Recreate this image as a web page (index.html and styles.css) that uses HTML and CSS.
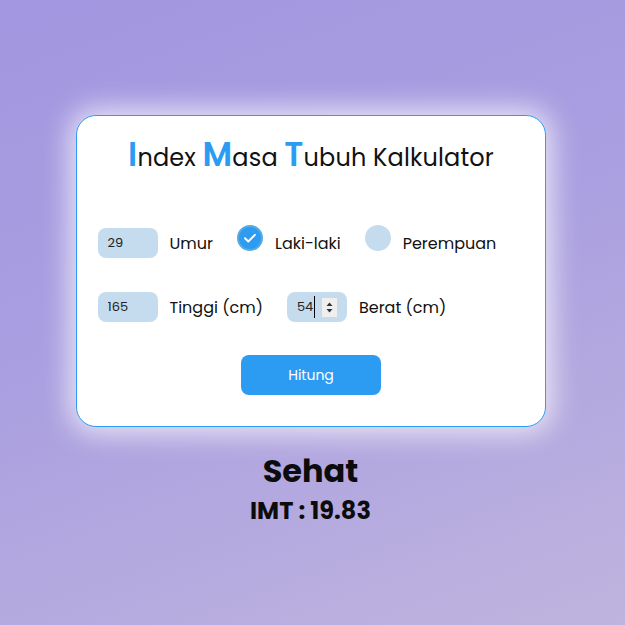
FILE: index.html
```html
<!DOCTYPE html>
<html lang="id">
<head>
<meta charset="utf-8">
<title>Index Masa Tubuh Kalkulator</title>
<link rel="stylesheet" href="styles.css">
</head>
<body>
<main class="page">
  <section class="card">
    <h1 class="title"><span class="big">I</span>ndex <span class="big">M</span>asa <span class="big">T</span>ubuh Kalkulator</h1>
    <div class="row row-1">
      <div class="group">
        <input class="field" type="text" value="29">
        <label class="label">Umur</label>
      </div>
      <div class="group">
        <span class="radio checked">
          <svg viewBox="0 0 26 26" width="26" height="26"><circle cx="13" cy="13" r="12" fill="#2b9cf2" stroke="#5aaae0" stroke-width="2"/><path d="M8 13.3l3.3 3.2 6.6-6.6" fill="none" stroke="#fff" stroke-width="2" stroke-linecap="round" stroke-linejoin="round"/></svg>
        </span>
        <label class="label">Laki-laki</label>
      </div>
      <div class="group">
        <span class="radio"></span>
        <label class="label">Perempuan</label>
      </div>
    </div>
    <div class="row row-2">
      <div class="group">
        <input class="field" type="text" value="165">
        <label class="label">Tinggi (cm)</label>
      </div>
      <div class="group">
        <div class="field field-focus">
          <span class="val">54</span><span class="caret"></span>
          <span class="spin">
            <svg viewBox="0 0 15 19" width="15" height="19"><rect width="15" height="19" fill="#efefef"/><path d="M4.5 8l3-3.5 3 3.5z" fill="#333"/><path d="M4.5 11l3 3.5 3-3.5z" fill="#333"/></svg>
          </span>
        </div>
        <label class="label">Berat (cm)</label>
      </div>
    </div>
    <div class="actions">
      <button class="btn" type="button">Hitung</button>
    </div>
  </section>
  <section class="result">
    <div class="status">Sehat</div>
    <div class="imt">IMT : 19.83</div>
  </section>
</main>
</body>
</html>
```
FILE: styles.css
```css
* { box-sizing: border-box; }
html, body { margin: 0; height: 100%; }
body {
  font-family: "Poppins", "Open Sans", "Noto Sans", sans-serif;
  background: linear-gradient(160deg, #a296e0 0%, #aa9fe0 45%, #bfb4de 100%);
  color: #111;
}
.page {
  min-height: 625px;
  display: flex;
  flex-direction: column;
  align-items: center;
  padding-top: 115px;
  padding-right: 4px;
}
.card {
  width: 470px;
  height: 312px;
  background: #fff;
  border: 1px solid #2e9cf4;
  border-radius: 20px;
  box-shadow: 0 0 28px 6px rgba(255,255,255,0.75);
  padding: 19px 20px 0 21px;
  display: flex;
  flex-direction: column;
}
.title {
  margin: 0;
  text-align: center;
  font-weight: 400;
  font-size: 24px;
  letter-spacing: 0.15px;
  line-height: 40px;
  color: #111;
}
.big {
  font-size: 33px;
  color: #2b9cf2;
  font-weight: 600;
}
.row {
  display: flex;
  align-items: center;
  gap: 24px;
}
.row-1 { margin-top: 50px; }
.row-2 { margin-top: 34px; }
.group {
  display: flex;
  align-items: center;
  gap: 12px;
}
.field {
  width: 60px;
  height: 30px;
  border: none;
  border-radius: 8px;
  background: #c5dcee;
  font-family: inherit;
  font-size: 13px;
  color: #222;
  padding: 0 10px;
  outline: none;
}
.field-focus {
  display: flex;
  align-items: center;
  padding: 0 10px;
  position: relative;
}
.caret {
  display: inline-block;
  width: 1px;
  height: 22px;
  background: #000;
  margin-left: 1px;
}
.spin {
  position: absolute;
  right: 10px;
  top: 6px;
  display: block;
  line-height: 0;
}
.label {
  font-size: 16px;
  color: #111;
}
.radio {
  width: 26px;
  height: 26px;
  border-radius: 50%;
  background: #c5dcee;
  display: block;
  line-height: 0;
  margin-top: -10px;
}
.radio.checked { background: none; }
.actions {
  display: flex;
  justify-content: center;
  margin-top: 33px;
}
.btn {
  width: 140px;
  height: 40px;
  border: none;
  border-radius: 8px;
  background: #2b9cf2;
  color: #fff;
  font-family: inherit;
  font-size: 14px;
}
.result {
  margin-top: 24px;
  text-align: center;
}
.status {
  font-size: 32px;
  font-weight: 700;
  line-height: 40px;
  color: #0c0c0c;
}
.imt {
  font-size: 24px;
  font-weight: 700;
  line-height: 32px;
  margin-top: 4px;
  color: #0c0c0c;
}
```
